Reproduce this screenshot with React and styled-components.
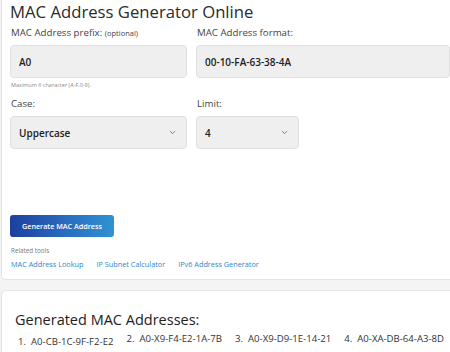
import React from 'react';
import styled, { createGlobalStyle } from 'styled-components';
import { ChevronDown } from 'lucide-react';

const GlobalStyle = createGlobalStyle`
  html, body {
    margin: 0;
    overflow: hidden;
  }
  body {
    background: #f4f4f4;
    font-family: "Open Sans", "Noto Sans", sans-serif;
    color: #333;
  }
`;

const addresses = [
  'A0-CB-1C-9F-F2-E2',
  'A0-X9-F4-E2-1A-7B',
  'A0-X9-D9-1E-14-21',
  'A0-XA-DB-64-A3-8D',
];

const links = ['MAC Address Lookup', 'IP Subnet Calculator', 'IPv6 Address Generator'];

const App = () => {
  return (
    <>
      <GlobalStyle />
      <Page>
        <Card>
          <Title>MAC Address Generator Online</Title>
          <Fields>
            <Field>
              <Label>MAC Address prefix: <Small>(optional)</Small></Label>
              <Input type="text" defaultValue="A0" />
              <Hint>Maximum 6 character (A-F,0-9).</Hint>
            </Field>
            <Field>
              <Label>MAC Address format:</Label>
              <Input type="text" defaultValue="00-10-FA-63-38-4A" />
            </Field>
            <Field>
              <Label>Case:</Label>
              <Select>
                <span>Uppercase</span>
                <ChevronDown size={9} strokeWidth={2} color="#555" />
              </Select>
            </Field>
            <Field>
              <Label>Limit:</Label>
              <Select $width="103px">
                <span>4</span>
                <ChevronDown size={9} strokeWidth={2} color="#555" />
              </Select>
            </Field>
          </Fields>
          <Button>Generate MAC Address</Button>
          <Related>Related tools</Related>
          <Links>
            {links.map((l) => (
              <Link key={l} href="#">{l}</Link>
            ))}
          </Links>
        </Card>
        <ResultCard>
          <Heading>Generated MAC Addresses:</Heading>
          <List>
            {addresses.map((a, i) => (
              <Item key={a} $first={i === 0}>{i + 1}.&nbsp; {a}</Item>
            ))}
          </List>
        </ResultCard>
      </Page>
    </>
  );
};

const Page = styled.div`
  width: 480px;
  padding-left: 1px;
`;

const Card = styled.div`
  background: #fff;
  border: 1px solid #e3e3e3;
  border-top: none;
  border-radius: 0 0 5px 5px;
  padding: 0 0 9px 8px;
`;

const Title = styled.h1`
  margin: 0;
  font-size: 16.7px;
  font-weight: 400;
  line-height: 23px;
  color: #2b2b2b;
`;

const Fields = styled.div`
  display: grid;
  grid-template-columns: 177px 254px;
  column-gap: 9px;
  row-gap: 9px;
  margin-top: 4px;
  align-items: start;
`;

const Field = styled.div`
  display: flex;
  flex-direction: column;
`;

const Label = styled.label`
  font-size: 9.7px;
  line-height: 12px;
  font-weight: 500;
  color: #444;
  margin: 0 0 6px 1px;
`;

const Small = styled.span`
  font-size: 7.5px;
`;

const Input = styled.input`
  box-sizing: border-box;
  height: 33px;
  width: 100%;
  background: #efefef;
  border: 1px solid #e0e0e0;
  border-radius: 4px;
  padding: 0 8px;
  font-family: inherit;
  font-size: 10px;
  font-weight: 600;
  color: #222;
  outline: none;
`;

const Hint = styled.div`
  margin: 3px 0 0 1px;
  font-size: 5.5px;
  line-height: 8px;
  color: #888;
`;

const Select = styled.div`
  box-sizing: border-box;
  height: 33px;
  width: ${(p) => p.$width || '100%'};
  background: #efefef;
  border: 1px solid #e0e0e0;
  border-radius: 4px;
  padding: 0 9px 0 8px;
  display: flex;
  align-items: center;
  justify-content: space-between;
  font-size: 10px;
  font-weight: 600;
  color: #222;
`;

const Button = styled.button`
  display: block;
  margin-top: 66px;
  height: 22px;
  width: 104px;
  padding: 0;
  border: none;
  border-radius: 3px;
  background: linear-gradient(90deg, #1d3f9e 0%, #2a6dc0 55%, #2f93d3 100%);
  color: #fff;
  font-family: inherit;
  font-size: 7.2px;
  font-weight: 600;
  cursor: pointer;
`;

const Related = styled.div`
  margin: 10px 0 0 1px;
  font-size: 6.3px;
  line-height: 8px;
  color: #777;
`;

const Links = styled.div`
  display: flex;
  gap: 13px;
  margin: 3px 0 0 1px;
  line-height: 12px;
`;

const Link = styled.a`
  font-size: 7.3px;
  color: #2f86c9;
  text-decoration: none;
`;

const ResultCard = styled.div`
  margin-top: 10px;
  background: #fff;
  border: 1px solid #e3e3e3;
  border-radius: 5px 5px 0 0;
  height: 80px;
  padding: 18px 0 0 13px;
`;

const Heading = styled.h2`
  margin: 0;
  font-size: 14.5px;
  font-weight: 500;
  line-height: 22px;
  color: #222;
`;

const List = styled.ol`
  display: flex;
  gap: 13px;
  margin: 2px 0 0;
  padding: 0 0 0 3px;
  list-style: none;
`;

const Item = styled.li`
  font-size: 9.6px;
  line-height: 12px;
  color: #333;
  padding-top: ${(p) => (p.$first ? '3px' : '0')};
`;

export default App;
